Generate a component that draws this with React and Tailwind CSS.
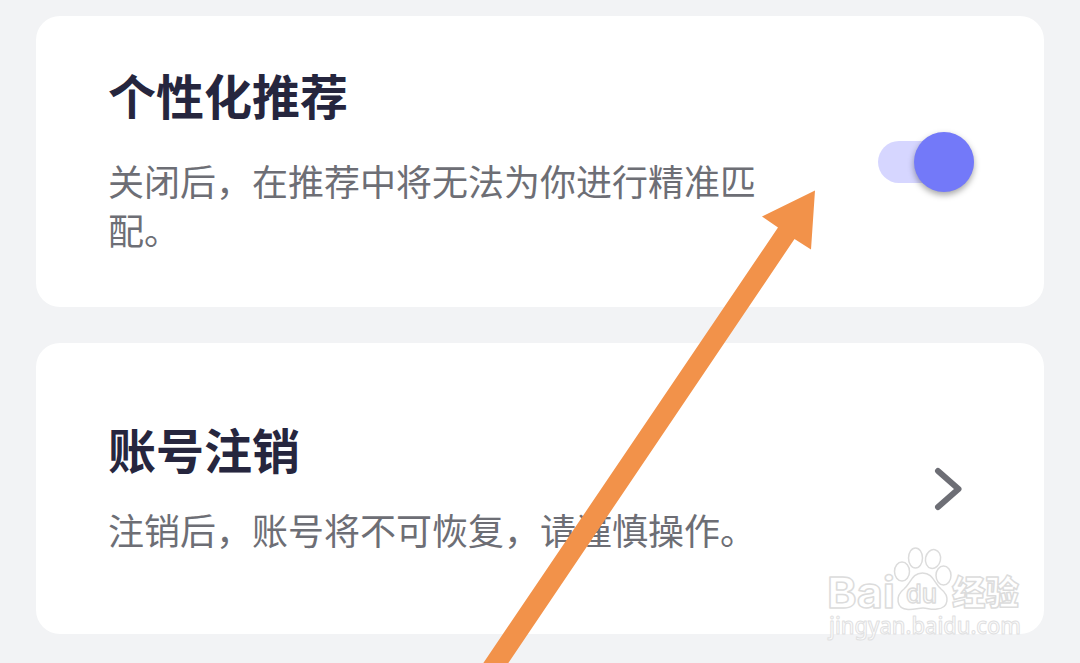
import React, { useState } from 'react';

function SettingCard({ title, description, children, className, gap }) {
  return (
    <section className={`flex h-[291px] items-start justify-between rounded-3xl bg-white pl-[72px] ${className}`}>
      <div className="w-[660px]">
        <h2 className="text-[48px] leading-[60px] font-bold text-[#26263e]">{title}</h2>
        <p className={`text-[36px] leading-[49px] text-[#6d6e75] ${gap}`}>{description}</p>
      </div>
      {children}
    </section>
  );
}

function Toggle({ checked, onChange }) {
  return (
    <button
      type="button"
      role="switch"
      aria-checked={checked}
      onClick={() => onChange(!checked)}
      className={`flex h-[42px] w-[95.5px] items-center rounded-full bg-[#d6d6ff] ${checked ? 'justify-end' : 'justify-start'}`}
    >
      <span className="size-[60px] shrink-0 rounded-full bg-[#7379f9] shadow-[0_3px_6px_rgba(0,0,0,0.35)]" />
    </button>
  );
}

function Arrow() {
  return (
    <svg className="pointer-events-none absolute inset-0" width="1080" height="663" viewBox="0 0 1080 663">
      <path d="M815 190.5 L762 216.5 L778 227.5 L483 663.5 H508 L794.5 239 L811 249.5 Z" fill="#f2924a" />
    </svg>
  );
}

function Watermark() {
  return (
    <svg
      className="pointer-events-none absolute left-[820px] top-[540px]"
      width="210"
      height="104"
      viewBox="0 0 210 104"
      fill="#fff"
      stroke="#dcdcdc"
      strokeWidth="1.5"
      strokeLinejoin="round"
      fontFamily="Inter, 'Noto Sans CJK SC', sans-serif"
      fontWeight="700"
    >
      <text x="7" y="67.500" fontSize="43" textLength="68" lengthAdjust="spacingAndGlyphs">Bai</text>
      <ellipse cx="82" cy="31.500" rx="7.500" ry="9.500" />
      <ellipse cx="95.500" cy="18" rx="7" ry="10" />
      <ellipse cx="113" cy="19" rx="7.500" ry="9.500" transform="rotate(12 113 19)" />
      <ellipse cx="123.500" cy="35.500" rx="7.500" ry="9.500" />
      <path d="M102.500 33 C92 33 91 43 84 49 C75 56 76 69 88 69.500 C94 70 98 68 103 68 C108 68 111 70 117 69 C129 68 130 56 121 49 C114 43 113 33 102.500 33 Z" />
      <text x="86" y="62.500" fontSize="26" fontWeight="500" textLength="31" lengthAdjust="spacingAndGlyphs">du</text>
      <text x="132" y="65" fontSize="34" fontWeight="900" textLength="67" lengthAdjust="spacingAndGlyphs">经验</text>
      <text x="9" y="93.500" fontSize="23" fontWeight="500" fontFamily="'Noto Sans', sans-serif" textLength="192" lengthAdjust="spacingAndGlyphs" fill="#fcfcfc" stroke="#e0e0e1" strokeWidth="1">
        jingyan.baidu.com
      </text>
    </svg>
  );
}

export default function App() {
  const [personalized, setPersonalized] = useState(true);

  return (
    <main className="relative flex h-[663px] w-[1080px] flex-col gap-9 overflow-hidden bg-[#f2f3f5] px-9 pt-4 font-['Noto_Sans_CJK_SC',sans-serif]">
      <SettingCard title="个性化推荐" description="关闭后，在推荐中将无法为你进行精准匹配。" className="pt-[48px] pr-[70.5px]" gap="mt-8">
        <div className="pt-[76.5px]">
          <Toggle checked={personalized} onChange={setPersonalized} />
        </div>
      </SettingCard>

      <SettingCard title="账号注销" description="注销后，账号将不可恢复，请谨慎操作。" className="pt-[75px] pr-[81px]" gap="mt-[27px]">
        <button type="button" className="mt-[47px]" aria-label="账号注销">
          <svg width="32" height="48" viewBox="0 0 32 48" fill="none" stroke="#6d6e75" strokeWidth="6" strokeLinecap="round" strokeLinejoin="round">
            <path d="M7 6 L27.500 24 L7 42" />
          </svg>
        </button>
      </SettingCard>

      <Watermark />
      <Arrow />
    </main>
  );
}
